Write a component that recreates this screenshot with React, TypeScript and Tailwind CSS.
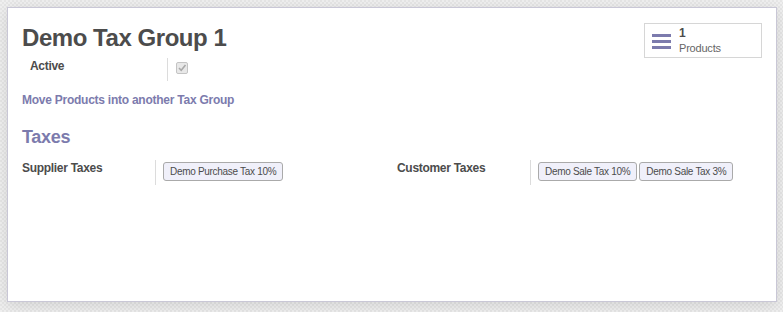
export default function App() {
  const supplierTaxes = ["Demo Purchase Tax 10%"];
  const customerTaxes = ["Demo Sale Tax 10%", "Demo Sale Tax 3%"];

  return (
    <div
      className="w-[783px] h-[312px] overflow-hidden pt-[7px] pl-[7px] pr-[6px] bg-[#ececec] bg-[repeating-conic-gradient(#f0f0f0_0_25%,#e6e6e6_0_50%)] bg-size-[4px_4px]"
      style={{ fontFamily: '"Liberation Sans", Arial, sans-serif' }}
    >
      {/* Sheet */}
      <div className="h-[295px] bg-white border border-[#c9c7d6] shadow-[0_3px_14px_rgba(0,0,0,0.12)] pl-[14px] pr-[14px] pt-[14px] text-[#4c4c4c]">
        <div className="flex justify-between">
          <div>
            <h1 className="text-[24px] leading-[30px] font-bold text-[#4c4c4c] mt-[1px] tracking-[-0.45px]">
              Demo Tax Group 1
            </h1>

            <div className="flex items-stretch mt-[5px] h-[23px]">
              <div className="w-[146px] pl-[8px] border-r border-[#dcdcdc] text-[12px] font-bold leading-[14px] pt-[1px] tracking-[-0.3px]">
                Active
              </div>
              <div className="pl-[8px] pt-[4px]">
                <div className="w-[12px] h-[12px] rounded-[2px] border border-[#c4c4c4] bg-[#e8e8e8] flex items-center justify-center">
                  <svg width="10" height="10" viewBox="0 0 10 10">
                    <path d="M2 5 L4.2 7.2 L8.5 2" stroke="#a9a9a9" strokeWidth="1.6" fill="none" />
                  </svg>
                </div>
              </div>
            </div>

            <div className="mt-[12px] text-[12px] font-bold text-[#7c7bad] leading-[14px] tracking-[-0.25px]">
              Move Products into another Tax Group
            </div>
          </div>

          {/* Products button */}
          <div className="w-[118px] h-[35px] border border-[#d6d6d6] bg-white flex items-center pl-[7px] mt-[1px]">
            <svg width="20" height="16" viewBox="0 0 20 16" className="mt-[1px]">
              <rect x="0" y="1" width="19" height="3" fill="#7c7bad" />
              <rect x="0" y="7" width="19" height="3" fill="#7c7bad" />
              <rect x="0" y="13" width="19" height="3" fill="#7c7bad" />
            </svg>
            <div className="ml-[7px] leading-[13px]">
              <div className="text-[12px] font-bold text-[#4c4c4c]">1</div>
              <div className="text-[11px] text-[#666] mt-[2px] tracking-[-0.2px]">Products</div>
            </div>
          </div>
        </div>

        <h2 className="mt-[19px] text-[18px] font-bold text-[#7c7bad] leading-[22px] tracking-[-0.3px]">
          Taxes
        </h2>

        <div className="flex mt-[12px]">
          <TaxField label="Supplier Taxes" tags={supplierTaxes} />
          <TaxField label="Customer Taxes" tags={customerTaxes} />
        </div>
      </div>
    </div>
  );
}

function TaxField({ label, tags }: { label: string; tags: string[] }) {
  return (
    <div className="w-[375px] shrink-0 flex h-[25px]">
      <div className="w-[134px] border-r border-[#dcdcdc] text-[12px] font-bold leading-[14px] pt-[1px] tracking-[-0.3px]">
        {label}
      </div>
      <div className="flex gap-[2px] pl-[7px] pt-[2px]">
        {tags.map((t) => (
          <span
            key={t}
            className="h-[19px] px-[6px] border border-[#aaaaaa] rounded-[3px] bg-[#f0f0fa] text-[10px] leading-[17px] text-[#4c4c4c] whitespace-nowrap tracking-[-0.3px]"
          >
            {t}
          </span>
        ))}
      </div>
    </div>
  );
}
